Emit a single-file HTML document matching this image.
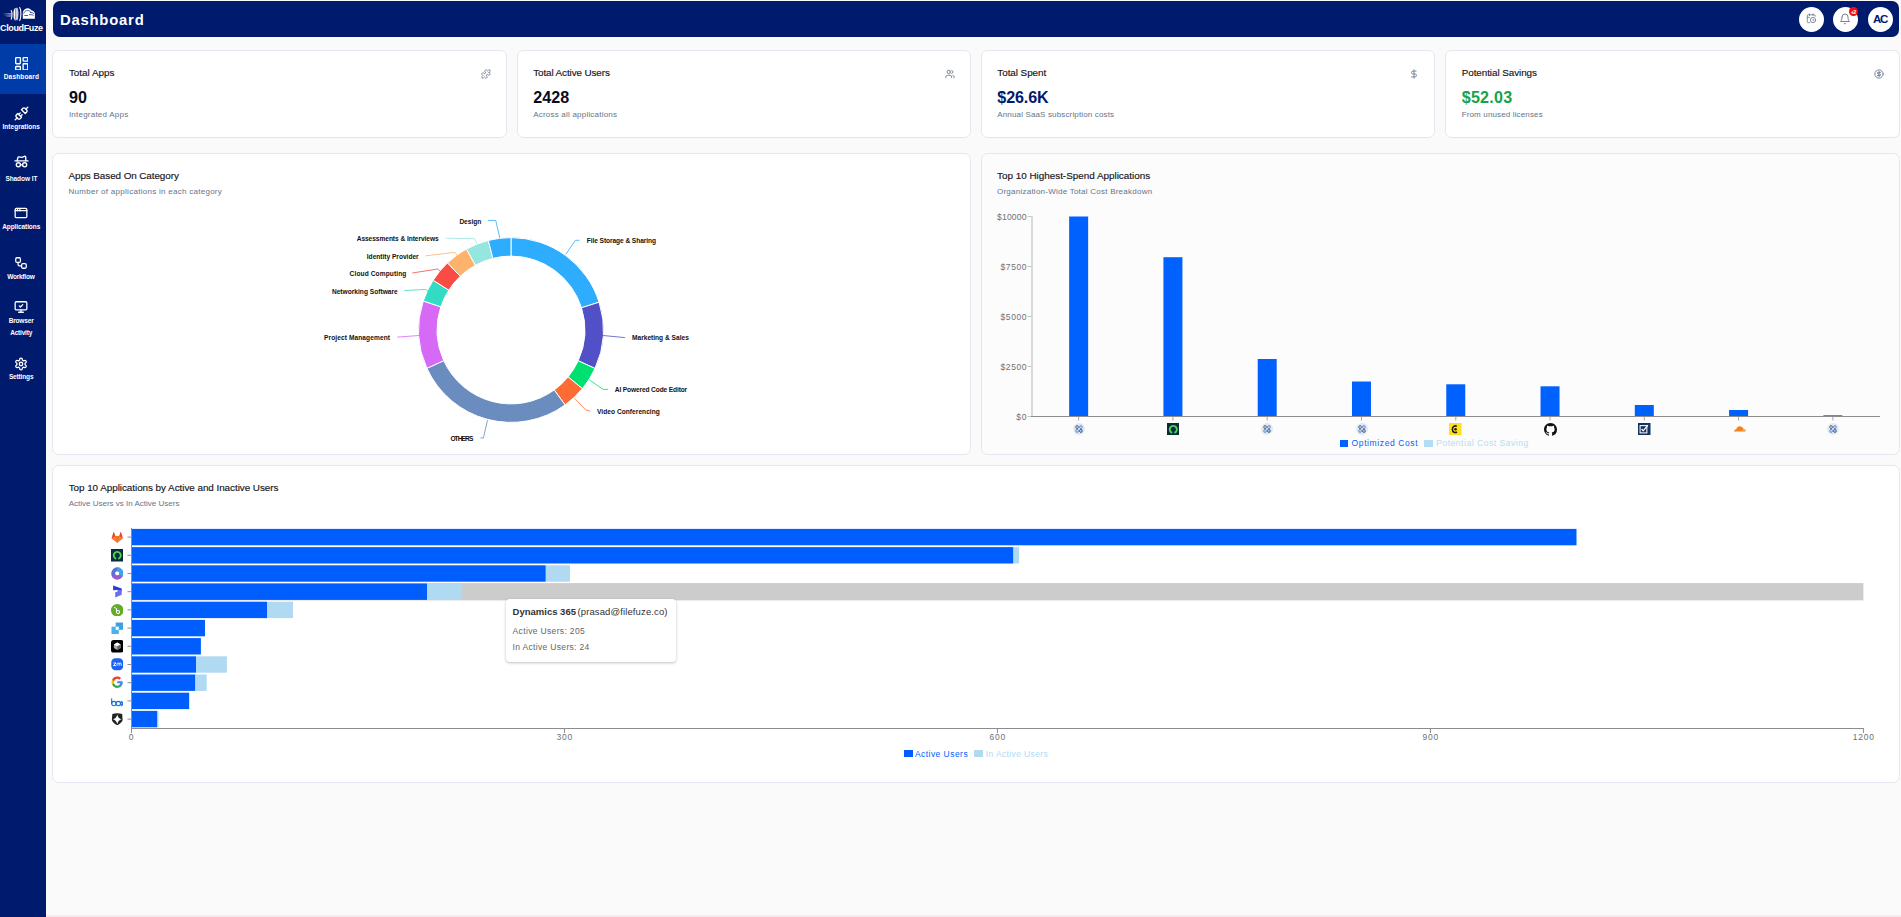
<!DOCTYPE html>
<html><head><meta charset="utf-8">
<style>
*{margin:0;padding:0;box-sizing:border-box}
html,body{width:1901px;height:917px;overflow:hidden;background:#fafafa;font-family:"Liberation Sans",sans-serif;}
.abs{position:absolute}
.tx{position:absolute;white-space:nowrap}
#sb{position:absolute;left:0;top:0;width:46px;height:917px;background:#001a6e}
#hdr{position:absolute;left:53px;top:1px;width:1846px;height:36px;background:#001a6e;border-radius:7px}
.card{position:absolute;background:#fff;border:1px solid #e3e8f0;border-radius:6.5px}
</style></head><body>

<div id="sb"></div>
<svg class="abs" style="left:0;top:0" width="46" height="24" viewBox="0 0 46 24">
  <defs><linearGradient id="sp" x1="0" x2="1"><stop offset="0" stop-color="#fff" stop-opacity="0"/><stop offset="1" stop-color="#fff" stop-opacity="0.9"/></linearGradient></defs>
  <path d="M2 13.6h9.5M4 15h7.5M6 16.2h5" stroke="url(#sp)" stroke-width="0.7" fill="none"/>
  <path d="M11.2 10.5c1 1.2 1.2 5.6 0 8.6" stroke="#fff" stroke-width="1.1" fill="none" stroke-linecap="round"/>
  <ellipse cx="16.9" cy="14" rx="1.6" ry="6.4" fill="#c8cde8"/>
  <path d="M15.2 8.5c-1 2-1 9 0 11.5M19.7 7.5c1.6 2.5 1.6 10 0 13" stroke="#fff" stroke-width="1.1" fill="none" stroke-linecap="round"/>
  <path d="M14.3 9.5c-.5 2-.5 7.5 0 9.5" stroke="#fff" stroke-width="0.8" fill="none"/>
  <path d="M22.8 18.8v-6c.3-2.5 2-4.5 4.5-4.6 2.2-.1 3.6.9 4.3 2.4 1.8.2 3.2 1.4 3.3 3.2v5z" fill="#fff"/>
  <path d="M23.6 13.5c.8-2 2.4-3 4-3 1.5 0 2.5.6 3.2 1.8M30 12.5c1.3-.3 2.8.2 3.8 1.2M24.3 15.5h3.8M29 14.8c1.2-.4 2.6-.2 4.6.6" stroke="#001a6e" stroke-width="0.7" fill="none"/>
</svg>
<div class="tx" style="left:0.00px;top:23.00px;font-size:9px;line-height:10px;color:#fff;font-weight:bold;letter-spacing:-0.373px;">CloudFuze</div>
<div class="abs" style="left:0;top:44px;width:46px;height:50px;background:#003ca8"></div>
<svg class="abs" style="left:14.65px;top:56.75px" width="13.5" height="13.5" viewBox="2 2 20 20" fill="none" stroke="#fff" stroke-width="2" stroke-linecap="round" stroke-linejoin="round"><rect width="7" height="9" x="3" y="3" rx="1"/><rect width="7" height="5" x="14" y="3" rx="1"/><rect width="7" height="9" x="14" y="12" rx="1"/><rect width="7" height="5" x="3" y="16" rx="1"/></svg>
<svg class="abs" style="left:13.90px;top:106.10px" width="15" height="15" viewBox="0 0 24 24" fill="none" stroke="#fff" stroke-width="2.2" stroke-linecap="round" stroke-linejoin="round"><path d="m19 5 3-3"/><path d="m2 22 3-3"/><path d="M6.3 20.3a2.4 2.4 0 0 0 3.4 0L12 18l-6-6-2.3 2.3a2.4 2.4 0 0 0 0 3.4Z"/><path d="M7.5 13.5 10 11"/><path d="M10.5 16.5 13 14"/><path d="m12 6 6 6 2.3-2.3a2.4 2.4 0 0 0 0-3.4l-2.6-2.6a2.4 2.4 0 0 0-3.4 0Z"/></svg>
<svg class="abs" style="left:13.90px;top:154.30px" width="15" height="15" viewBox="0 0 24 24" fill="none" stroke="#fff" stroke-width="2.2" stroke-linecap="round" stroke-linejoin="round"><path d="M1.5 11h21"/><path d="M5 11l1.2-5.2a1.5 1.5 0 0 1 1.6-1.1l4.7.6 4.2-1.6a1.5 1.5 0 0 1 2 1L19 11"/><circle cx="7" cy="17.3" r="3.3"/><circle cx="17" cy="17.3" r="3.3"/><path d="M10.3 17.3h3.4"/></svg>
<svg class="abs" style="left:14.40px;top:206.30px" width="14" height="14" viewBox="0 0 24 24" fill="none" stroke="#fff" stroke-width="2.2" stroke-linecap="round" stroke-linejoin="round"><rect x="2" y="4" width="20" height="16" rx="2"/><path d="M10 4v4"/><path d="M2 8h20"/><path d="M6 4v4"/></svg>
<svg class="abs" style="left:14.40px;top:255.90px" width="14" height="14" viewBox="0 0 24 24" fill="none" stroke="#fff" stroke-width="2.2" stroke-linecap="round" stroke-linejoin="round"><rect width="8" height="8" x="3" y="3" rx="2"/><path d="M7 11v4a2 2 0 0 0 2 2h4"/><rect width="8" height="8" x="13" y="13" rx="2"/></svg>
<svg class="abs" style="left:14.40px;top:300.40px" width="14" height="14" viewBox="0 0 24 24" fill="none" stroke="#fff" stroke-width="2.2" stroke-linecap="round" stroke-linejoin="round"><path d="m9 10 2 2 4-4"/><rect width="20" height="14" x="2" y="3" rx="2"/><path d="M12 17v4"/><path d="M8 21h8"/></svg>
<svg class="abs" style="left:14.40px;top:356.50px" width="14" height="14" viewBox="0 0 24 24" fill="none" stroke="#fff" stroke-width="2.2" stroke-linecap="round" stroke-linejoin="round"><path d="M12.22 2h-.44a2 2 0 0 0-2 2v.18a2 2 0 0 1-1 1.73l-.43.25a2 2 0 0 1-2 0l-.15-.08a2 2 0 0 0-2.73.73l-.22.38a2 2 0 0 0 .73 2.73l.15.1a2 2 0 0 1 1 1.72v.51a2 2 0 0 1-1 1.74l-.15.09a2 2 0 0 0-.73 2.73l.22.38a2 2 0 0 0 2.73.73l.15-.08a2 2 0 0 1 2 0l.43.25a2 2 0 0 1 1 1.73V20a2 2 0 0 0 2 2h.44a2 2 0 0 0 2-2v-.18a2 2 0 0 1 1-1.73l.43-.25a2 2 0 0 1 2 0l.15.08a2 2 0 0 0 2.73-.73l.22-.39a2 2 0 0 0-.73-2.73l-.15-.08a2 2 0 0 1-1-1.74v-.5a2 2 0 0 1 1-1.74l.15-.09a2 2 0 0 0 .73-2.73l-.22-.38a2 2 0 0 0-2.73-.73l-.15.08a2 2 0 0 1-2 0l-.43-.25a2 2 0 0 1-1-1.73V4a2 2 0 0 0-2-2z"/><circle cx="12" cy="12" r="3"/></svg>
<div class="tx" style="left:3.75px;top:73.00px;font-size:6.5px;line-height:7px;color:#fff;font-weight:bold;letter-spacing:0.165px;">Dashboard</div>
<div class="tx" style="left:2.55px;top:123.00px;font-size:6.5px;line-height:7px;color:#fff;font-weight:bold;letter-spacing:0.011px;">Integrations</div>
<div class="tx" style="left:5.40px;top:175.00px;font-size:6.5px;line-height:7px;color:#fff;font-weight:bold;letter-spacing:-0.066px;">Shadow IT</div>
<div class="tx" style="left:2.15px;top:223.00px;font-size:6.5px;line-height:7px;color:#fff;font-weight:bold;letter-spacing:-0.081px;">Applications</div>
<div class="tx" style="left:7.15px;top:273.00px;font-size:6.5px;line-height:7px;color:#fff;font-weight:bold;letter-spacing:-0.225px;">Workflow</div>
<div class="tx" style="left:8.65px;top:317.00px;font-size:6.5px;line-height:7px;color:#fff;font-weight:bold;letter-spacing:-0.163px;">Browser</div>
<div class="tx" style="left:10.15px;top:329.00px;font-size:6.5px;line-height:7px;color:#fff;font-weight:bold;letter-spacing:-0.195px;">Activity</div>
<div class="tx" style="left:8.90px;top:373.00px;font-size:6.5px;line-height:7px;color:#fff;font-weight:bold;letter-spacing:-0.147px;">Settings</div>
<div id="hdr"></div>
<div class="tx" style="left:59.90px;top:12.00px;font-size:14.8px;line-height:16px;color:#fff;font-weight:bold;letter-spacing:0.819px;">Dashboard</div>
<div class="abs" style="left:1799.0px;top:7px;width:25px;height:25px;border-radius:50%;background:#fff"></div>
<div class="abs" style="left:1833.0px;top:7px;width:25px;height:25px;border-radius:50%;background:#fff"></div>
<div class="abs" style="left:1868.0px;top:7px;width:25px;height:25px;border-radius:50%;background:#fff"></div>
<svg class="abs" style="left:1805.6px;top:13.2px" width="10.5" height="10.5" viewBox="0 0 24 24" fill="none" stroke="#64748b" stroke-width="1.8" stroke-linecap="round" stroke-linejoin="round"><path d="M21 7.5V6a2 2 0 0 0-2-2H5a2 2 0 0 0-2 2v14a2 2 0 0 0 2 2h3.5"/><path d="M16 2v4"/><path d="M8 2v4"/><path d="M3 10h5"/><path d="M17.5 17.5 16 16.3V14"/><circle cx="16" cy="16" r="6"/></svg>
<svg class="abs" style="left:1839.2px;top:12.6px" width="12" height="12" viewBox="0 0 24 24" fill="none" stroke="#64748b" stroke-width="1.8" stroke-linecap="round" stroke-linejoin="round"><path d="M6 8a6 6 0 0 1 12 0c0 7 3 9 3 9H3s3-2 3-9"/><path d="M10.3 21a1.94 1.94 0 0 0 3.4 0"/></svg>
<div class="abs" style="left:1849px;top:7px;width:9px;height:9px;border-radius:50%;background:#f00d0d"></div>
<div class="tx" style="left:1850.75px;top:9.00px;font-size:5.5px;line-height:6px;color:#fff;font-weight:bold;letter-spacing:-0.712px;">+2</div>
<div class="tx" style="left:1872.90px;top:13.00px;font-size:11.5px;line-height:12px;color:#001a6e;font-weight:bold;letter-spacing:-1.105px;">AC</div>
<div class="card" style="left:52px;top:50px;width:455px;height:88px"></div>
<div class="card" style="left:517px;top:50px;width:454px;height:88px"></div>
<div class="card" style="left:981px;top:50px;width:454px;height:88px"></div>
<div class="card" style="left:1445px;top:50px;width:455px;height:88px"></div>
<div class="tx" style="left:68.90px;top:67.00px;font-size:9.9px;line-height:11px;color:#141420;-webkit-text-stroke:0.15px #141420;">Total Apps</div>
<div class="tx" style="left:68.90px;top:88.00px;font-size:16.1px;line-height:18px;color:#0b0b1a;font-weight:bold;letter-spacing:0.149px;">90</div>
<div class="tx" style="left:68.90px;top:110.00px;font-size:8px;line-height:9px;color:#64748b;letter-spacing:0.230px;">Integrated Apps</div>
<div class="tx" style="left:533.20px;top:67.00px;font-size:9.9px;line-height:11px;color:#141420;letter-spacing:-0.105px;-webkit-text-stroke:0.15px #141420;">Total Active Users</div>
<div class="tx" style="left:533.20px;top:88.00px;font-size:16.1px;line-height:18px;color:#0b0b1a;font-weight:bold;letter-spacing:0.083px;">2428</div>
<div class="tx" style="left:533.20px;top:110.00px;font-size:8px;line-height:9px;color:#64748b;letter-spacing:0.211px;">Across all applications</div>
<div class="tx" style="left:997.30px;top:67.00px;font-size:9.9px;line-height:11px;color:#141420;letter-spacing:-0.046px;-webkit-text-stroke:0.15px #141420;">Total Spent</div>
<div class="tx" style="left:997.30px;top:88.00px;font-size:16.1px;line-height:18px;color:#001a6e;font-weight:bold;letter-spacing:-0.115px;">$26.6K</div>
<div class="tx" style="left:997.30px;top:110.00px;font-size:8px;line-height:9px;color:#64748b;letter-spacing:0.145px;">Annual SaaS subscription costs</div>
<div class="tx" style="left:1461.70px;top:67.00px;font-size:9.9px;line-height:11px;color:#141420;letter-spacing:-0.067px;-webkit-text-stroke:0.15px #141420;">Potential Savings</div>
<div class="tx" style="left:1461.70px;top:88.00px;font-size:16.1px;line-height:18px;color:#16a34a;font-weight:bold;letter-spacing:0.265px;">$52.03</div>
<div class="tx" style="left:1461.70px;top:110.00px;font-size:8px;line-height:9px;color:#64748b;letter-spacing:0.144px;">From unused licenses</div>
<svg class="abs" style="left:481.00px;top:68.60px" width="10" height="10" viewBox="0 0 24 24" fill="none" stroke="#64748b" stroke-width="2" stroke-linecap="round" stroke-linejoin="round"><path d="M19.439 7.85c-.049.322.059.648.289.878l1.568 1.568c.47.47.706 1.087.706 1.704s-.235 1.233-.706 1.704l-1.611 1.611a.98.98 0 0 1-.837.276c-.47-.07-.802-.48-.968-.925a2.501 2.501 0 1 0-3.214 3.214c.446.166.855.497.925.968a.979.979 0 0 1-.276.837l-1.61 1.61a2.404 2.404 0 0 1-1.705.707 2.402 2.402 0 0 1-1.704-.706l-1.568-1.568a1.026 1.026 0 0 0-.877-.29c-.493.074-.84.504-1.02.968a2.5 2.5 0 1 1-3.237-3.237c.464-.18.894-.527.967-1.02a1.026 1.026 0 0 0-.289-.877l-1.568-1.568A2.402 2.402 0 0 1 1.998 12c0-.617.236-1.234.706-1.704L4.23 8.77c.24-.24.581-.353.917-.303.515.077.877.528 1.073 1.01a2.5 2.5 0 1 0 3.259-3.259c-.482-.196-.933-.558-1.01-1.073-.05-.336.062-.676.303-.917l1.525-1.525A2.402 2.402 0 0 1 12 1.998c.617 0 1.234.236 1.704.706l1.568 1.568c.23.23.556.338.877.29.493-.074.84-.504 1.02-.968a2.5 2.5 0 1 1 3.237 3.237c-.464.18-.894.527-.967 1.02Z"/></svg>
<svg class="abs" style="left:945.00px;top:68.60px" width="10" height="10" viewBox="0 0 24 24" fill="none" stroke="#64748b" stroke-width="2" stroke-linecap="round" stroke-linejoin="round"><path d="M16 21v-2a4 4 0 0 0-4-4H6a4 4 0 0 0-4 4v2"/><circle cx="9" cy="7" r="4"/><path d="M22 21v-2a4 4 0 0 0-3-3.87"/><path d="M16 3.13a4 4 0 0 1 0 7.75"/></svg>
<svg class="abs" style="left:1408.70px;top:68.80px" width="10" height="10" viewBox="0 0 24 24" fill="none" stroke="#64748b" stroke-width="2" stroke-linecap="round" stroke-linejoin="round"><line x1="12" x2="12" y1="2" y2="22"/><path d="M17 5H9.5a3.5 3.5 0 0 0 0 7h5a3.5 3.5 0 0 1 0 7H6"/></svg>
<svg class="abs" style="left:1873.70px;top:68.80px" width="10" height="10" viewBox="0 0 24 24" fill="none" stroke="#64748b" stroke-width="2" stroke-linecap="round" stroke-linejoin="round"><circle cx="12" cy="12" r="10"/><path d="M16 8h-6a2 2 0 1 0 0 4h4a2 2 0 1 1 0 4H8"/><path d="M12 18V6"/></svg>
<div class="card" style="left:52px;top:153px;width:919px;height:302px"></div>
<div class="tx" style="left:68.50px;top:170.00px;font-size:9.9px;line-height:11px;color:#141420;letter-spacing:-0.078px;-webkit-text-stroke:0.15px #141420;">Apps Based On Category</div>
<div class="tx" style="left:68.50px;top:187.00px;font-size:8px;line-height:9px;color:#64748b;letter-spacing:0.278px;">Number of applications in each category</div>
<svg class="abs" style="left:0;top:0" width="1000" height="460" viewBox="0 0 1000 460">
<path d="M511.00 237.60A92.4 92.4 0 0 1 599.12 302.21L581.48 307.78A73.9 73.9 0 0 0 511.00 256.10Z" fill="#2eacfd" stroke="#fff" stroke-width="1" stroke-linejoin="round"/>
<path d="M599.12 302.21A92.4 92.4 0 0 1 595.01 368.46L578.19 360.76A73.9 73.9 0 0 0 581.48 307.78Z" fill="#5150c6" stroke="#fff" stroke-width="1" stroke-linejoin="round"/>
<path d="M595.01 368.46A92.4 92.4 0 0 1 582.40 388.65L568.11 376.91A73.9 73.9 0 0 0 578.19 360.76Z" fill="#00e070" stroke="#fff" stroke-width="1" stroke-linejoin="round"/>
<path d="M582.40 388.65A92.4 92.4 0 0 1 565.05 404.94L554.23 389.94A73.9 73.9 0 0 0 568.11 376.91Z" fill="#ff6b35" stroke="#fff" stroke-width="1" stroke-linejoin="round"/>
<path d="M565.05 404.94A92.4 92.4 0 0 1 426.92 368.32L443.75 360.65A73.9 73.9 0 0 0 554.23 389.94Z" fill="#6b8cbe" stroke="#fff" stroke-width="1" stroke-linejoin="round"/>
<path d="M426.92 368.32A92.4 92.4 0 0 1 423.27 300.99L440.84 306.80A73.9 73.9 0 0 0 443.75 360.65Z" fill="#d66af6" stroke="#fff" stroke-width="1" stroke-linejoin="round"/>
<path d="M423.27 300.99A92.4 92.4 0 0 1 433.16 280.22L448.74 290.18A73.9 73.9 0 0 0 440.84 306.80Z" fill="#33dbc4" stroke="#fff" stroke-width="1" stroke-linejoin="round"/>
<path d="M433.16 280.22A92.4 92.4 0 0 1 447.51 262.86L460.22 276.31A73.9 73.9 0 0 0 448.74 290.18Z" fill="#f84c44" stroke="#fff" stroke-width="1" stroke-linejoin="round"/>
<path d="M447.51 262.86A92.4 92.4 0 0 1 466.49 249.03L475.40 265.24A73.9 73.9 0 0 0 460.22 276.31Z" fill="#fdb36c" stroke="#fff" stroke-width="1" stroke-linejoin="round"/>
<path d="M466.49 249.03A92.4 92.4 0 0 1 488.33 240.42L492.87 258.36A73.9 73.9 0 0 0 475.40 265.24Z" fill="#94e6de" stroke="#fff" stroke-width="1" stroke-linejoin="round"/>
<path d="M488.33 240.42A92.4 92.4 0 0 1 511.00 237.60L511.00 256.10A73.9 73.9 0 0 0 492.87 258.36Z" fill="#2eacfd" stroke="#fff" stroke-width="1" stroke-linejoin="round"/>
<path d="M565.7 254.5 L575.3 240.3 L579.4 240.3" fill="none" stroke="#2eacfd" stroke-width="0.8"/>
<path d="M603.1 335.5 L624.9 337.6" fill="none" stroke="#5150c6" stroke-width="0.8"/>
<path d="M589.5 379.9 L603.1 389.4 L608.0 389.4" fill="none" stroke="#00e070" stroke-width="0.8"/>
<path d="M574.7 398.4 L585.6 409.9 L590.3 411.2" fill="none" stroke="#ff6b35" stroke-width="0.8"/>
<path d="M487.5 420.2 L483.4 437.9 L480.4 437.9" fill="none" stroke="#6b8cbe" stroke-width="0.8"/>
<path d="M419.1 335.5 L397.3 337.1" fill="none" stroke="#d66af6" stroke-width="0.8"/>
<path d="M428.1 291.3 L425.9 289.4 L404.4 290.5" fill="none" stroke="#33dbc4" stroke-width="0.8"/>
<path d="M440.4 271.4 L437.6 269.0 L412.3 273.0" fill="none" stroke="#f84c44" stroke-width="0.8"/>
<path d="M457.5 255.9 L454.8 252.3 L425.4 255.9" fill="none" stroke="#fdb36c" stroke-width="0.8"/>
<path d="M477.2 243.6 L474.4 238.7 L445.8 238.2" fill="none" stroke="#94e6de" stroke-width="0.8"/>
<path d="M499.8 238.0 L495.7 220.4 L488.0 220.4" fill="none" stroke="#2eacfd" stroke-width="0.8"/>
</svg>
<div class="tx" style="left:459.40px;top:218.00px;font-size:6.6px;line-height:7px;color:#111;font-weight:bold;letter-spacing:-0.031px;">Design</div>
<div class="tx" style="left:356.70px;top:235.00px;font-size:6.6px;line-height:7px;color:#111;font-weight:bold;letter-spacing:-0.053px;">Assessments &amp; Interviews</div>
<div class="tx" style="left:366.80px;top:253.00px;font-size:6.6px;line-height:7px;color:#111;font-weight:bold;letter-spacing:-0.010px;">Identity Provider</div>
<div class="tx" style="left:349.60px;top:270.00px;font-size:6.6px;line-height:7px;color:#111;font-weight:bold;letter-spacing:0.102px;">Cloud Computing</div>
<div class="tx" style="left:331.90px;top:288.00px;font-size:6.6px;line-height:7px;color:#111;font-weight:bold;letter-spacing:0.016px;">Networking Software</div>
<div class="tx" style="left:324.00px;top:334.00px;font-size:6.6px;line-height:7px;color:#111;font-weight:bold;letter-spacing:0.089px;">Project Management</div>
<div class="tx" style="left:450.40px;top:435.00px;font-size:6.6px;line-height:7px;color:#111;font-weight:bold;letter-spacing:-0.916px;">OTHERS</div>
<div class="tx" style="left:597.00px;top:408.00px;font-size:6.6px;line-height:7px;color:#111;font-weight:bold;letter-spacing:0.039px;">Video Conferencing</div>
<div class="tx" style="left:614.80px;top:386.00px;font-size:6.6px;line-height:7px;color:#111;font-weight:bold;letter-spacing:-0.130px;">AI Powered Code Editor</div>
<div class="tx" style="left:632.00px;top:334.00px;font-size:6.6px;line-height:7px;color:#111;font-weight:bold;">Marketing &amp; Sales</div>
<div class="tx" style="left:586.70px;top:237.00px;font-size:6.6px;line-height:7px;color:#111;font-weight:bold;letter-spacing:-0.066px;">File Storage &amp; Sharing</div>
<div class="card" style="left:981px;top:153px;width:919px;height:302px;background:#fcfcfc"></div>
<div class="tx" style="left:997.00px;top:170.00px;font-size:9.9px;line-height:11px;color:#141420;-webkit-text-stroke:0.15px #141420;">Top 10 Highest-Spend Applications</div>
<div class="tx" style="left:997.00px;top:187.00px;font-size:8px;line-height:9px;color:#64748b;letter-spacing:0.242px;">Organization-Wide Total Cost Breakdown</div>
<svg class="abs" style="left:0;top:0" width="1901" height="460" viewBox="0 0 1901 460">
<path d="M1032 216.0V416.5" stroke="#c6c6c6" stroke-width="1.3" fill="none"/>
<path d="M1027.5 216.5H1031.5" stroke="#c6c6c6" stroke-width="1"/>
<path d="M1027.5 266.5H1031.5" stroke="#c6c6c6" stroke-width="1"/>
<path d="M1027.5 316.5H1031.5" stroke="#c6c6c6" stroke-width="1"/>
<path d="M1027.5 366.5H1031.5" stroke="#c6c6c6" stroke-width="1"/>
<path d="M1027.5 416.5H1031.5" stroke="#c6c6c6" stroke-width="1"/>
<rect x="1069.14" y="216.50" width="19" height="200.00" fill="#0061fe"/>
<path d="M1078.64 416.5V420.5" stroke="#a8a8a8" stroke-width="1"/>
<rect x="1163.42" y="257.20" width="19" height="159.30" fill="#0061fe"/>
<path d="M1172.92 416.5V420.5" stroke="#a8a8a8" stroke-width="1"/>
<rect x="1257.69" y="359.00" width="19" height="57.50" fill="#0061fe"/>
<path d="M1267.19 416.5V420.5" stroke="#a8a8a8" stroke-width="1"/>
<rect x="1351.97" y="381.50" width="19" height="35.00" fill="#0061fe"/>
<path d="M1361.47 416.5V420.5" stroke="#a8a8a8" stroke-width="1"/>
<rect x="1446.25" y="384.30" width="19" height="32.20" fill="#0061fe"/>
<path d="M1455.75 416.5V420.5" stroke="#a8a8a8" stroke-width="1"/>
<rect x="1540.53" y="386.30" width="19" height="30.20" fill="#0061fe"/>
<path d="M1550.03 416.5V420.5" stroke="#a8a8a8" stroke-width="1"/>
<rect x="1634.81" y="405.00" width="19" height="11.50" fill="#0061fe"/>
<path d="M1644.31 416.5V420.5" stroke="#a8a8a8" stroke-width="1"/>
<rect x="1729.08" y="410.00" width="19" height="6.50" fill="#0061fe"/>
<path d="M1738.58 416.5V420.5" stroke="#a8a8a8" stroke-width="1"/>
<rect x="1823.36" y="415.30" width="19" height="1.20" fill="#0061fe"/>
<path d="M1832.86 416.5V420.5" stroke="#a8a8a8" stroke-width="1"/>
<path d="M1031 416.5H1880" stroke="#8c8c8c" stroke-width="1"/>
</svg>
<div class="tx" style="left:997.00px;top:212.00px;font-size:8.5px;line-height:10px;color:#6e7079;letter-spacing:0.213px;">$10000</div>
<div class="tx" style="left:1000.60px;top:262.00px;font-size:8.5px;line-height:10px;color:#6e7079;letter-spacing:0.548px;">$7500</div>
<div class="tx" style="left:1000.60px;top:312.00px;font-size:8.5px;line-height:10px;color:#6e7079;letter-spacing:0.548px;">$5000</div>
<div class="tx" style="left:1000.60px;top:362.00px;font-size:8.5px;line-height:10px;color:#6e7079;letter-spacing:0.548px;">$2500</div>
<div class="tx" style="left:1016.30px;top:412.00px;font-size:8.5px;line-height:10px;color:#6e7079;letter-spacing:0.673px;">$0</div>
<div class="abs" style="left:1072.6px;top:423.2px;width:12px;height:12px;border-radius:50%;background:#e3e8f0"></div><svg class="abs" style="left:1074.6px;top:425.2px" width="8" height="8" viewBox="0 0 8 8" fill="none" stroke-width="0.9"><ellipse cx="2.1" cy="2.1" rx="1.3" ry="1.5" stroke="#4b5563"/><ellipse cx="5.9" cy="2.1" rx="1.3" ry="1.5" stroke="#3b82f6"/><ellipse cx="2.1" cy="5.9" rx="1.3" ry="1.5" stroke="#3b82f6"/><ellipse cx="5.9" cy="5.9" rx="1.3" ry="1.5" stroke="#374151"/></svg>
<svg class="abs" style="left:1166.62px;top:422.6px" width="12.6" height="12.6" viewBox="0 0 24 24"><rect width="24" height="24" fill="#0b2a3c"/><path d="M10 18.8A6.8 6.8 0 1 1 14 18.8" fill="none" stroke="#4fd35a" stroke-width="3.6"/></svg>
<div class="abs" style="left:1261.2px;top:423.2px;width:12px;height:12px;border-radius:50%;background:#e3e8f0"></div><svg class="abs" style="left:1263.2px;top:425.2px" width="8" height="8" viewBox="0 0 8 8" fill="none" stroke-width="0.9"><ellipse cx="2.1" cy="2.1" rx="1.3" ry="1.5" stroke="#4b5563"/><ellipse cx="5.9" cy="2.1" rx="1.3" ry="1.5" stroke="#3b82f6"/><ellipse cx="2.1" cy="5.9" rx="1.3" ry="1.5" stroke="#3b82f6"/><ellipse cx="5.9" cy="5.9" rx="1.3" ry="1.5" stroke="#374151"/></svg>
<div class="abs" style="left:1355.5px;top:423.2px;width:12px;height:12px;border-radius:50%;background:#e3e8f0"></div><svg class="abs" style="left:1357.5px;top:425.2px" width="8" height="8" viewBox="0 0 8 8" fill="none" stroke-width="0.9"><ellipse cx="2.1" cy="2.1" rx="1.3" ry="1.5" stroke="#4b5563"/><ellipse cx="5.9" cy="2.1" rx="1.3" ry="1.5" stroke="#3b82f6"/><ellipse cx="2.1" cy="5.9" rx="1.3" ry="1.5" stroke="#3b82f6"/><ellipse cx="5.9" cy="5.9" rx="1.3" ry="1.5" stroke="#374151"/></svg>
<svg class="abs" style="left:1449.45px;top:422.8px" width="12.5" height="12.5" viewBox="0 0 24 24"><rect width="24" height="24" fill="#ffe01b"/><path d="M15 6.5C12 4.5 6.5 6 6.5 12s5.5 7.5 8.8 5.3" fill="none" stroke="#1a1a1a" stroke-width="3"/><circle cx="12.5" cy="12" r="2.5" fill="#1a1a1a"/></svg>
<svg class="abs" style="left:1543.53px;top:422.5px" width="13" height="13" viewBox="0 0 16 16"><path fill="#111" d="M8 0C3.58 0 0 3.58 0 8c0 3.54 2.29 6.53 5.47 7.59.4.07.55-.17.55-.38 0-.19-.01-.82-.01-1.49-2.01.37-2.53-.49-2.69-.94-.09-.23-.48-.94-.82-1.13-.28-.15-.68-.52-.01-.53.63-.01 1.08.58 1.23.82.72 1.21 1.87.87 2.33.66.07-.52.28-.87.51-1.07-1.78-.2-3.64-.89-3.64-3.95 0-.87.31-1.59.82-2.15-.08-.2-.36-1.02.08-2.12 0 0 .67-.21 2.2.82.64-.18 1.32-.27 2-.27.68 0 1.36.09 2 .27 1.53-1.04 2.2-.82 2.2-.82.44 1.1.16 1.92.08 2.12.51.56.82 1.27.82 2.15 0 3.07-1.87 3.75-3.65 3.95.29.25.54.73.54 1.48 0 1.07-.01 1.93-.01 2.2 0 .21.15.46.55.38A8.013 8.013 0 0016 8c0-4.42-3.58-8-8-8z"/></svg>
<svg class="abs" style="left:1638.01px;top:422.8px" width="12.5" height="12.5" viewBox="0 0 24 24"><rect width="24" height="24" fill="#12345e"/><rect x="4" y="5" width="13" height="14" fill="none" stroke="#fff" stroke-width="2"/><path d="M7 11.5l3 3.5L19 4" fill="none" stroke="#fff" stroke-width="2.4"/></svg>
<svg class="abs" style="left:1731.58px;top:424px" width="14" height="9" viewBox="0 0 14 9"><path d="M2 7.5c0-1.3 1-2.3 2.3-2.3.3-1.8 1.8-3 3.6-3 1.6 0 3 1 3.4 2.6 1 0 1.9.8 1.9 1.9v.8z" fill="#f48120"/><path d="M10 7.5c.3-1.3 1.2-2.2 2.5-2.2.4 0 .8.2 1 .5v1.7z" fill="#faad3f"/></svg>
<div class="abs" style="left:1826.9px;top:423.2px;width:12px;height:12px;border-radius:50%;background:#e3e8f0"></div><svg class="abs" style="left:1828.9px;top:425.2px" width="8" height="8" viewBox="0 0 8 8" fill="none" stroke-width="0.9"><ellipse cx="2.1" cy="2.1" rx="1.3" ry="1.5" stroke="#4b5563"/><ellipse cx="5.9" cy="2.1" rx="1.3" ry="1.5" stroke="#3b82f6"/><ellipse cx="2.1" cy="5.9" rx="1.3" ry="1.5" stroke="#3b82f6"/><ellipse cx="5.9" cy="5.9" rx="1.3" ry="1.5" stroke="#374151"/></svg>
<div class="abs" style="left:1339.8px;top:439.8px;width:8.7px;height:6.8px;background:#0061fe"></div>
<div class="tx" style="left:1351.60px;top:438.00px;font-size:8.5px;line-height:10px;color:#0061fe;letter-spacing:0.605px;">Optimized Cost</div>
<div class="abs" style="left:1423.8px;top:439.8px;width:8.9px;height:6.8px;background:#b3dcf5"></div>
<div class="tx" style="left:1436.20px;top:438.00px;font-size:8.5px;line-height:10px;color:#b3dcf5;letter-spacing:0.538px;">Potential Cost Saving</div>
<div class="card" style="left:52px;top:465px;width:1848px;height:318px"></div>
<div class="tx" style="left:68.70px;top:482.00px;font-size:9.9px;line-height:11px;color:#141420;letter-spacing:-0.045px;-webkit-text-stroke:0.15px #141420;">Top 10 Applications by Active and Inactive Users</div>
<div class="tx" style="left:68.70px;top:499.00px;font-size:8px;line-height:9px;color:#64748b;">Active Users vs In Active Users</div>
<svg class="abs" style="left:0;top:460px" width="1901" height="320" viewBox="0 460 1901 320">
<rect x="131.5" y="583.1" width="1731.9" height="17.3" fill="#cccccc"/>
<rect x="131.50" y="528.90" width="1445.00" height="16.4" fill="#005eff"/>
<path d="M127.5 537.10H131.5" stroke="#8c8c8c" stroke-width="1"/>
<rect x="1013.20" y="547.10" width="5.90" height="16.4" fill="#b0daf2"/>
<rect x="131.50" y="547.10" width="881.70" height="16.4" fill="#005eff"/>
<path d="M127.5 555.30H131.5" stroke="#8c8c8c" stroke-width="1"/>
<rect x="545.70" y="565.30" width="24.30" height="16.4" fill="#b0daf2"/>
<rect x="131.50" y="565.30" width="414.20" height="16.4" fill="#005eff"/>
<path d="M127.5 573.50H131.5" stroke="#8c8c8c" stroke-width="1"/>
<rect x="427.00" y="583.50" width="35.00" height="16.4" fill="#b0daf2"/>
<rect x="131.50" y="583.50" width="295.50" height="16.4" fill="#005eff"/>
<path d="M127.5 591.70H131.5" stroke="#8c8c8c" stroke-width="1"/>
<rect x="267.00" y="601.70" width="26.00" height="16.4" fill="#b0daf2"/>
<rect x="131.50" y="601.70" width="135.50" height="16.4" fill="#005eff"/>
<path d="M127.5 609.90H131.5" stroke="#8c8c8c" stroke-width="1"/>
<rect x="131.50" y="619.90" width="73.50" height="16.4" fill="#005eff"/>
<path d="M127.5 628.10H131.5" stroke="#8c8c8c" stroke-width="1"/>
<rect x="131.50" y="638.10" width="69.40" height="16.4" fill="#005eff"/>
<path d="M127.5 646.30H131.5" stroke="#8c8c8c" stroke-width="1"/>
<rect x="196.00" y="656.30" width="30.90" height="16.4" fill="#b0daf2"/>
<rect x="131.50" y="656.30" width="64.50" height="16.4" fill="#005eff"/>
<path d="M127.5 664.50H131.5" stroke="#8c8c8c" stroke-width="1"/>
<rect x="195.10" y="674.50" width="11.60" height="16.4" fill="#b0daf2"/>
<rect x="131.50" y="674.50" width="63.60" height="16.4" fill="#005eff"/>
<path d="M127.5 682.70H131.5" stroke="#8c8c8c" stroke-width="1"/>
<rect x="131.50" y="692.70" width="57.70" height="16.4" fill="#005eff"/>
<path d="M127.5 700.90H131.5" stroke="#8c8c8c" stroke-width="1"/>
<rect x="157.10" y="710.90" width="1.50" height="16.4" fill="#b0daf2"/>
<rect x="131.50" y="710.90" width="25.60" height="16.4" fill="#005eff"/>
<path d="M127.5 719.10H131.5" stroke="#8c8c8c" stroke-width="1"/>
<path d="M131.5 528V728.5" stroke="#8c8c8c" stroke-width="1"/>
<path d="M131 728.5H1863.9" stroke="#8c8c8c" stroke-width="1"/>
<path d="M131.50 728.5V733" stroke="#8c8c8c" stroke-width="1"/>
<path d="M564.48 728.5V733" stroke="#8c8c8c" stroke-width="1"/>
<path d="M997.45 728.5V733" stroke="#8c8c8c" stroke-width="1"/>
<path d="M1430.43 728.5V733" stroke="#8c8c8c" stroke-width="1"/>
<path d="M1863.40 728.5V733" stroke="#8c8c8c" stroke-width="1"/>
</svg>
<div class="tx" style="left:128.75px;top:732.00px;font-size:8.5px;line-height:10px;color:#6e7079;">0</div>
<div class="tx" style="left:556.43px;top:732.00px;font-size:8.5px;line-height:10px;color:#6e7079;letter-spacing:0.823px;">300</div>
<div class="tx" style="left:989.40px;top:732.00px;font-size:8.5px;line-height:10px;color:#6e7079;letter-spacing:0.823px;">600</div>
<div class="tx" style="left:1422.38px;top:732.00px;font-size:8.5px;line-height:10px;color:#6e7079;letter-spacing:0.823px;">900</div>
<div class="tx" style="left:1852.65px;top:732.00px;font-size:8.5px;line-height:10px;color:#6e7079;letter-spacing:0.773px;">1200</div>
<svg class="abs" style="left:110.75px;top:530.85px" width="12.5" height="12.5" viewBox="0 0 24 24"><path d="M12 22.5 1.6 14.6a1 1 0 0 1-.4-1.1L4.7 2.2a.6.6 0 0 1 1.1 0L8.3 9.5h7.4l2.5-7.3a.6.6 0 0 1 1.1 0l3.5 11.3a1 1 0 0 1-.4 1.1z" fill="#e24329"/><path d="M12 22.5 8.3 9.5h7.4z" fill="#fc6d26"/><path d="M12 22.5 1.2 13.5 8.3 9.5z" fill="#fca326" opacity=".7"/><path d="M12 22.5 22.8 13.5 15.7 9.5z" fill="#fca326" opacity=".7"/></svg>
<svg class="abs" style="left:110.75px;top:549.05px" width="12.5" height="12.5" viewBox="0 0 24 24"><rect x="0" y="0" width="24" height="24" fill="#0b2a3c"/><path d="M10 18.8A6.8 6.8 0 1 1 14 18.8" fill="none" stroke="#4fd35a" stroke-width="3.6"/></svg>
<svg class="abs" style="left:110.75px;top:567.25px" width="12.5" height="12.5" viewBox="0 0 24 24"><g transform="rotate(-90 12 12.3)"><circle cx="12" cy="12.3" r="7.9" fill="none" stroke="#5a6fd8" stroke-width="7.4"/><circle cx="12" cy="12.3" r="7.9" fill="none" stroke="#3aa6e8" stroke-width="7.4" stroke-dasharray="16.5 50"/><circle cx="12" cy="12.3" r="7.9" fill="none" stroke="#9a5ad0" stroke-width="7.4" stroke-dasharray="16.5 50" stroke-dashoffset="-16.5"/></g></svg>
<svg class="abs" style="left:110.75px;top:585.45px" width="12.5" height="12.5" viewBox="0 0 24 24"><path d="M4 0.8 20.6 6.8V12.5L12.5 9.8 4 10.2z" fill="#2d3fd3"/><path d="M20.6 9.5V18.6L8.1 24V14L12.8 12.3V9.8z" fill="#6f6cf0"/></svg>
<svg class="abs" style="left:110.75px;top:603.65px" width="12.5" height="12.5" viewBox="0 0 24 24"><circle cx="12" cy="12" r="12" fill="#63ab2b"/><path d="M10.5 8v7.5a3 3 0 1 0 3-3h-3" fill="none" stroke="#fff" stroke-width="2"/><path d="M6 6.5l3 1.5" stroke="#fff" stroke-width="2"/></svg>
<svg class="abs" style="left:110.75px;top:621.85px" width="12.5" height="12.5" viewBox="0 0 24 24"><rect x="9" y="1" width="14" height="14" fill="#3aa0e0"/><rect x="1" y="9" width="14" height="14" fill="#4ab0ee"/><rect x="9" y="9" width="6" height="6" fill="#fff"/></svg>
<svg class="abs" style="left:110.75px;top:640.05px" width="12.5" height="12.5" viewBox="0 0 24 24"><rect x="0" y="0" width="24" height="24" rx="5" fill="#000"/><path d="M12 5 18.5 8.5v7L12 19 5.5 15.5v-7z" fill="#aaa"/><path d="M12 5 18.5 8.5 12 12 5.5 8.5z" fill="#fff"/><path d="M12 12v7l6.5-3.5v-7z" fill="#666"/></svg>
<svg class="abs" style="left:110.75px;top:658.25px" width="12.5" height="12.5" viewBox="0 0 24 24"><rect x="0.5" y="0.5" width="23" height="23" rx="8" fill="#1a63f5"/><g fill="none" stroke="#fff" stroke-width="1.7" stroke-linejoin="round"><path d="M4.6 9.6h5L4.6 14.6h5"/><path d="M11.6 14.8V11.6a2 2 0 0 1 4 0v3.2M15.6 11.6a2 2 0 0 1 4 0v3.2"/></g></svg>
<svg class="abs" style="left:110.75px;top:676.45px" width="12.5" height="12.5" viewBox="0 0 24 24"><path d="M22.5 12.2c0-.8-.1-1.4-.2-2.1H12v4h5.9c-.3 1.4-1.1 2.6-2.3 3.4v2.8h3.7c2.1-2 3.2-4.9 3.2-8.1z" fill="#4285f4"/><path d="M12 23c3 0 5.5-1 7.3-2.7l-3.700-2.8c-1 .7-2.2 1.1-3.6 1.1-2.8 0-5.2-1.9-6-4.5H2.2v2.9C4 20.6 7.7 23 12 23z" fill="#34a853"/><path d="M6 14.1c-.2-.7-.3-1.4-.3-2.1s.1-1.4.3-2.1V7H2.2C1.4 8.5 1 10.2 1 12s.4 3.5 1.2 5z" fill="#fbbc05"/><path d="M12 5.4c1.6 0 3 .5 4.1 1.6l3.1-3.1C17.5 2 15 1 12 1 7.7 1 4 3.4 2.2 7L6 9.9c.8-2.6 3.2-4.5 6-4.5z" fill="#ea4335"/></svg>
<svg class="abs" style="left:110.75px;top:694.65px" width="12.5" height="12.5" viewBox="0 0 24 24"><g fill="none" stroke="#0f6fd8" stroke-width="2.1" stroke-linecap="round"><path d="M1.3 7.4V16.3"/><circle cx="5.5" cy="16.4" r="4.2"/><circle cx="14.1" cy="16.4" r="4.2"/><path d="M19.6 12.3l4 8.2M23.6 12.3l-4 8.2"/></g></svg>
<svg class="abs" style="left:110.75px;top:712.85px" width="12.5" height="12.5" viewBox="0 0 24 24"><path d="M2.5 1.8C8 0 16 0 21.5 1.8L22.3 13.5c-1.2 4.2-5.5 8.3-10.3 10-4.8-1.7-9.1-5.8-10.3-10z" fill="#222"/><path d="M12 2.8c.9 5 3.8 8.4 8.8 9.4-5 1-7.9 4.4-8.8 9.6-.9-5.2-3.8-8.6-8.8-9.6 5-1 7.9-4.4 8.8-9.4z" fill="#fff"/></svg>
<div class="abs" style="left:904.2px;top:750.3px;width:8.8px;height:6.8px;background:#005eff"></div>
<div class="tx" style="left:914.90px;top:749.00px;font-size:8.5px;line-height:10px;color:#005eff;letter-spacing:0.459px;">Active Users</div>
<div class="abs" style="left:974px;top:750.3px;width:8.8px;height:6.8px;background:#b0daf2"></div>
<div class="tx" style="left:985.80px;top:749.00px;font-size:8.5px;line-height:10px;color:#b0daf2;letter-spacing:0.378px;">In Active Users</div>
<div class="abs" style="left:505.5px;top:599.3px;width:170px;height:63px;background:#fff;border-radius:4px;box-shadow:0 1px 3px rgba(0,0,0,0.25)"></div>
<div class="tx" style="left:512.60px;top:606.00px;font-size:9.5px;line-height:11px;color:#333;font-weight:bold;">Dynamics 365</div>
<div class="tx" style="left:577.50px;top:606.00px;font-size:9.5px;line-height:11px;color:#333;letter-spacing:0.114px;">(prasad@filefuze.co)</div>
<div class="tx" style="left:512.60px;top:626.00px;font-size:8.5px;line-height:10px;color:#666;letter-spacing:0.345px;">Active Users: 205</div>
<div class="tx" style="left:512.60px;top:642.00px;font-size:8.5px;line-height:10px;color:#666;letter-spacing:0.322px;">In Active Users: 24</div>
<div class="abs" style="left:46px;top:915px;width:1855px;height:2px;background:#f7e8ee"></div>
</body></html>
